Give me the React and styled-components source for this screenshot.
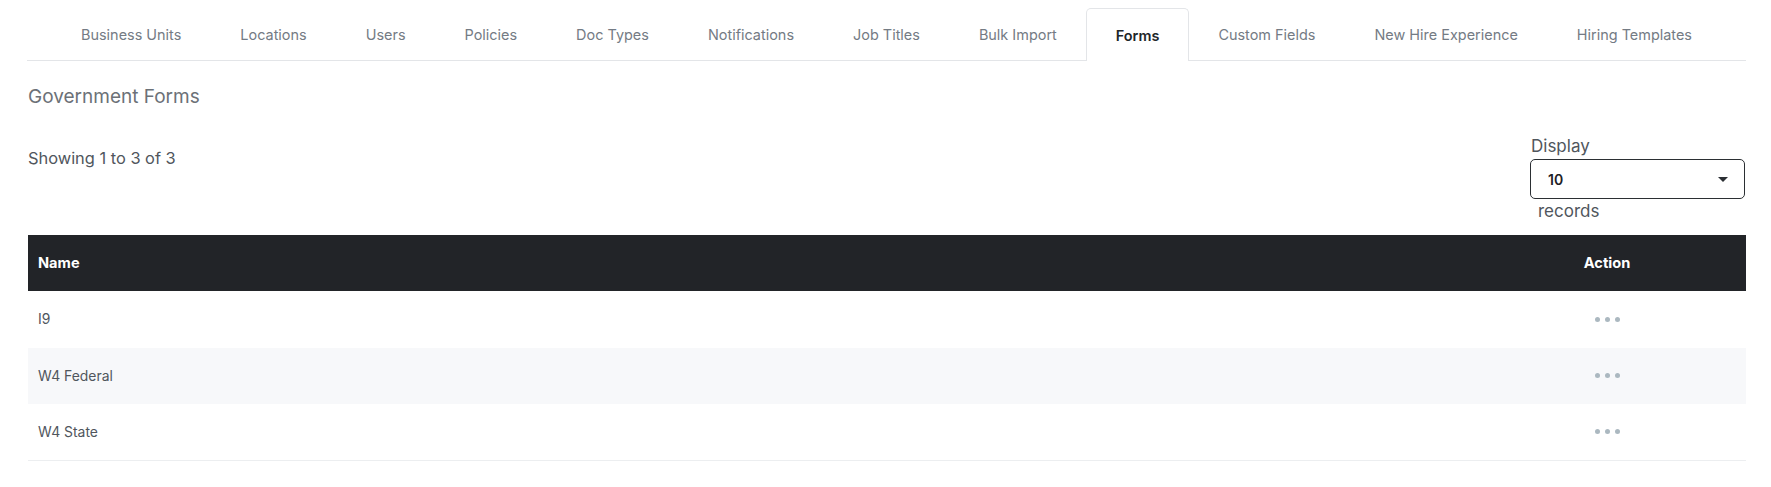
import React from "react";
import styled, { createGlobalStyle } from "styled-components";

const Global = createGlobalStyle`
  html, body { margin: 0; padding: 0; background: #fff; }
  body { font-family: Inter, "Noto Sans", sans-serif; -webkit-font-smoothing: antialiased; }
  * { box-sizing: border-box; }
`;

const Page = styled.div`
  padding: 8px 25px 0 27px;
  width: 1771px;
`;

const TabBar = styled.nav`
  display: flex;
  justify-content: center;
  border-bottom: 1px solid #e3e5e8;
  height: 53px;
`;

const Tab = styled.div`
  display: flex;
  align-items: center;
  padding: 0 28.5px;
  font-size: 14.45px;
  color: ${(p) => (p.$active ? "#212529" : "#747b84")};
  font-weight: ${(p) => (p.$active ? 600 : 400)};
  background: ${(p) => (p.$active ? "#fff" : "transparent")};
  border: 1px solid ${(p) => (p.$active ? "#e3e5e8" : "transparent")};
  border-bottom: none;
  border-radius: 5px 5px 0 0;
  margin-bottom: ${(p) => (p.$active ? "-1px" : "0")};
  height: ${(p) => (p.$active ? "53px" : "52px")};
  white-space: nowrap;
`;

const Title = styled.h2`
  margin: 26px 0 0 1px;
  font-size: 19px;
  font-weight: 400;
  color: #6c7177;
  line-height: 20px;
`;

const Toolbar = styled.div`
  display: flex;
  justify-content: space-between;
  align-items: flex-start;
  margin-top: 14px;
`;

const Showing = styled.div`
  margin-top: 27px;
  margin-left: 1px;
  font-size: 16.4px;
  color: #50565d;
`;

const DisplayBox = styled.div`
  width: 215px;
  margin-top: 15px;
  margin-right: 1px;
  display: flex;
  flex-direction: column;
  font-size: 17px;
  color: #50565d;
`;

const Label = styled.div`
  line-height: 20px;
  padding-left: 1px;
`;

const Select = styled.div`
  margin-top: 3px;
  height: 40px;
  border: 1px solid #2b2f33;
  border-radius: 5px;
  display: flex;
  align-items: center;
  justify-content: space-between;
  padding: 0 16px 0 17px;
  font-size: 14px;
  font-weight: 600;
  color: #1d2125;
`;

const Caret = styled.span`
  width: 0;
  height: 0;
  border-left: 5px solid transparent;
  border-right: 5px solid transparent;
  border-top: 5px solid #2b2f33;
`;

const Records = styled.div`
  padding-left: 8px;
  line-height: 22px;
  margin-top: 1px;
`;

const Table = styled.div`
  margin-top: 13px;
  margin-left: 1px;
`;

const Row = styled.div`
  display: grid;
  grid-template-columns: 1fr 278px;
  align-items: center;
  height: ${(p) => (p.$head ? "56px" : "56.5px")};
  padding-left: 10px;
  background: ${(p) => (p.$head ? "#222428" : p.$alt ? "#f7f8fa" : "#fff")};
  color: ${(p) => (p.$head ? "#fff" : "#50565d")};
  font-size: ${(p) => (p.$head ? "14.6px" : "13.9px")};
  font-weight: ${(p) => (p.$head ? 700 : 400)};
  border-bottom: ${(p) => (p.$last ? "1px solid #eceef0" : "none")};
`;

const ActionCell = styled.div`
  display: flex;
  justify-content: center;
  gap: 5px;
`;

const Dot = styled.span`
  width: 5px;
  height: 5px;
  border-radius: 50%;
  background: #abb8c0;
`;

const tabs = [
  "Business Units",
  "Locations",
  "Users",
  "Policies",
  "Doc Types",
  "Notifications",
  "Job Titles",
  "Bulk Import",
  "Forms",
  "Custom Fields",
  "New Hire Experience",
  "Hiring Templates",
];

const rows = ["I9", "W4 Federal", "W4 State"];

export default function App() {
  return (
    <>
      <Global />
      <Page>
        <TabBar>
          {tabs.map((t) => (
            <Tab key={t} $active={t === "Forms"}>
              {t}
            </Tab>
          ))}
        </TabBar>
        <Title>Government Forms</Title>
        <Toolbar>
          <Showing>Showing 1 to 3 of 3</Showing>
          <DisplayBox>
            <Label>Display</Label>
            <Select>
              <span>10</span>
              <Caret />
            </Select>
            <Records>records</Records>
          </DisplayBox>
        </Toolbar>
        <Table>
          <Row $head>
            <div>Name</div>
            <ActionCell>Action</ActionCell>
          </Row>
          {rows.map((r, i) => (
            <Row key={r} $alt={i % 2 === 1} $last={i === rows.length - 1}>
              <div>{r}</div>
              <ActionCell>
                <Dot />
                <Dot />
                <Dot />
              </ActionCell>
            </Row>
          ))}
        </Table>
      </Page>
    </>
  );
}
